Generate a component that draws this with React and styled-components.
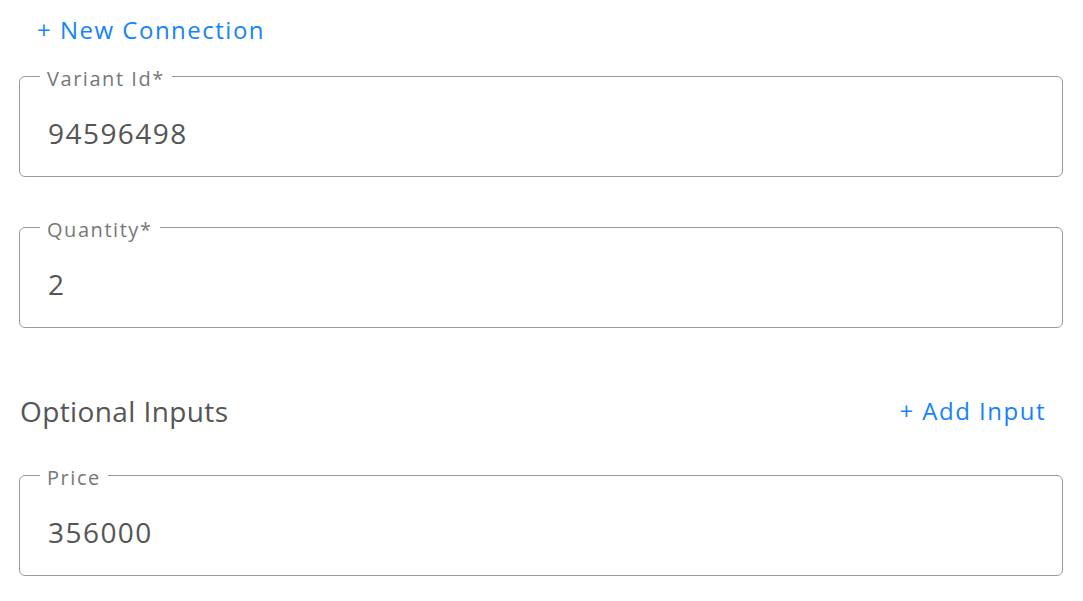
import React from 'react'
import styled, { createGlobalStyle } from 'styled-components'

// order form: connection link, required inputs and optional inputs

const Global = createGlobalStyle`
    body {
        margin: 0;
        background: #fff;
        font-family: "Open Sans", "Noto Sans", sans-serif;
    }
`;

const Page = styled.div`
    display: flex;
    flex-direction: column;
    padding: 0 20px 0 19px;
`;

const LinkButton = styled.button`
    background: none;
    border: none;
    padding: 0;
    font-family: inherit;
    font-size: 24px;
    letter-spacing: 1.5px;
    color: #1683fb;
    cursor: pointer;
    line-height: 34px;
`;

const TopRow = styled.div`
    display: flex;
    align-items: flex-start;
    padding: 13px 0 0 18px;
    height: 76px;
    box-sizing: border-box;
`;

const Box = styled.div`
    position: relative;
    margin-bottom: ${p => p.$gap || 0}px;
    padding: 12px 27px 0 28px;
    border: 1px solid #9a9a9a;
    border-radius: 6px;
    height: 101px;
    box-sizing: border-box;
    display: flex;
    align-items: center;
`;

const Label = styled.span`
    position: absolute;
    top: -10px;
    left: 20px;
    padding: 0 7px;
    background: #fff;
    font-size: 20px;
    line-height: 24px;
    color: #777;
    letter-spacing: 1.55px;
`;

const Value = styled.input`
    border: none;
    outline: none;
    padding: 0;
    width: 100%;
    height: 38px;
    font-family: inherit;
    font-size: 28px;
    letter-spacing: 1.45px;
    color: #555;
    background: transparent;
`;

const SectionRow = styled.div`
    display: flex;
    justify-content: space-between;
    align-items: center;
    padding: 0 17px 0 1px;
    margin: 64px 0 45px 0;
    height: 38px;
`;

const SectionTitle = styled.h3`
    margin: 0;
    font-weight: 400;
    font-size: 28px;
    line-height: 38px;
    letter-spacing: 0.4px;
    color: #555;
`;

const TextField = ({ label, value, gap }) => (
    <Box $gap={gap}>
        <Label>{label}</Label>
        <Value defaultValue={value} />
    </Box>
)

const App = () => {
    return (
        <Page>
            <Global />
            <TopRow>
                <LinkButton>+ New Connection</LinkButton>
            </TopRow>
            <TextField label="Variant Id*" value="94596498" gap={50} />
            <TextField label="Quantity*" value="2" />
            <SectionRow>
                <SectionTitle>Optional Inputs</SectionTitle>
                <LinkButton>+ Add Input</LinkButton>
            </SectionRow>
            <TextField label="Price" value="356000" />
        </Page>
    )
}

export default App;
